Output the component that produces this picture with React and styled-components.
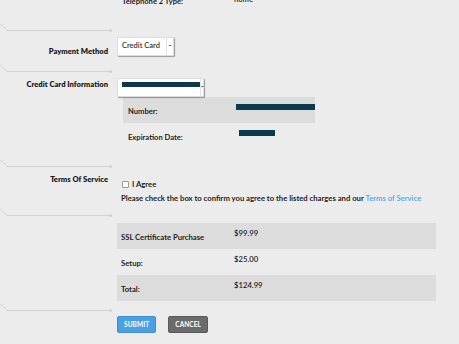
import styled, { createGlobalStyle } from "styled-components";

const GlobalStyle = createGlobalStyle`
	html, body {
		margin: 0;
		padding: 0;
		background: #ececec;
		overflow: hidden;
	}
	body {
		font-family: Lato, "Open Sans", "Liberation Sans", sans-serif;
		color: #1e1e1e;
	}
`;

const Divider = () => (
	<DividerWrap>
		<svg width="114" height="9" viewBox="0 0 114 9">
			<path d="M0 0.5 L7 7.5 L110 7.5" fill="none" stroke="#d2d2d2" strokeWidth="1" />
			<circle cx="110.5" cy="7.5" r="1.6" fill="#d2d2d2" />
		</svg>
	</DividerWrap>
);

const Select = ({ children, width }) => (
	<SelectBox $width={width}>
		<SelectText>{children}</SelectText>
		<Caret>-</Caret>
	</SelectBox>
);

const App = () => {
	return (
		<Page>
			<GlobalStyle />
			<Section $top={-13} $bottom={10}>
				<span />
				<DetailRow>
					<DetailLabel>Telephone 2 Type:</DetailLabel>
					<DetailValue $shift={4}>home</DetailValue>
				</DetailRow>
			</Section>
			<Divider />

			<Section $top={5} $bottom={8}>
				<Label $pad={9}>Payment Method</Label>
				<div>
					<Select width={57}>Credit Card</Select>
				</div>
			</Section>
			<Divider />

			<Section $top={5} $bottom={10}>
				<Label $pad={1}>Credit Card Information</Label>
				<div>
					<Select width={87}>
						<Redacted $w={78} $h={5} />
					</Select>
					<Details>
						<DetailRow $shade>
							<DetailLabel>Number:</DetailLabel>
							<DetailValue>
								<Redacted $w={79} $h={6} />
							</DetailValue>
						</DetailRow>
						<DetailRow>
							<DetailLabel>Expiration Date:</DetailLabel>
							<DetailValue $shift={3}>
								<Redacted $w={36} $h={6} />
							</DetailValue>
						</DetailRow>
					</Details>
				</div>
			</Section>
			<Divider />

			<Section $top={0} $bottom={5}>
				<Label $pad={6}>Terms Of Service</Label>
				<Terms>
					<Agree>
						<Checkbox />
						<span>I Agree</span>
					</Agree>
					<Notice>
						Please check the box to confirm you agree to the listed charges and our{" "}
						<Link href="#">Terms of Service</Link>
					</Notice>
				</Terms>
			</Section>
			<Divider />

			<Section $top={6} $bottom={2}>
				<span />
				<Charges>
					<ChargeRow $shade>
						<span>SSL Certificate Purchase</span>
						<Amount>$99.99</Amount>
					</ChargeRow>
					<ChargeRow>
						<span>Setup:</span>
						<Amount>$25.00</Amount>
					</ChargeRow>
					<ChargeRow $shade>
						<span>Total:</span>
						<Amount>$124.99</Amount>
					</ChargeRow>
				</Charges>
			</Section>
			<Divider />

			<Actions>
				<Button $variant="primary">Submit</Button>
				<Button>Cancel</Button>
			</Actions>
		</Page>
	);
};

const Page = styled.div`
	width: 459px;
	height: 344px;
	overflow: hidden;
	font-weight: 700;
`;

const DividerWrap = styled.div`
	height: 9px;
	line-height: 0;

	svg {
		display: block;
	}
`;

const Section = styled.div`
	display: grid;
	grid-template-columns: 108px 1fr;
	column-gap: 9px;
	margin-top: ${(p) => p.$top}px;
	margin-bottom: ${(p) => p.$bottom}px;
`;

const Label = styled.div`
	text-align: right;
	font-size: 7.6px;
	line-height: 10px;
	font-weight: 800;
	padding-top: ${(p) => p.$pad}px;
	white-space: nowrap;
`;

const SelectBox = styled.div`
	position: relative;
	display: flex;
	align-items: center;
	width: ${(p) => p.$width}px;
	height: 19px;
	box-sizing: border-box;
	background: #fff;
	border: 1px solid #dcdcdc;
	border-radius: 1px;
	box-shadow: 1px 1px 1px rgba(0, 0, 0, 0.35);
	padding-left: 4px;
`;

const SelectText = styled.span`
	flex: 1;
	font-size: 7.5px;
	font-weight: 600;
	color: #333;
	line-height: 10px;
	margin-top: -2px;
`;

const Caret = styled.span`
	width: 6px;
	height: 100%;
	border-left: 1px solid #e2e2e2;
	font-size: 7px;
	line-height: 15px;
	text-align: center;
	color: #222;
`;

const Redacted = styled.span`
	display: inline-block;
	width: ${(p) => p.$w}px;
	height: ${(p) => p.$h}px;
	background: #0b3a4e;
	vertical-align: top;
`;

const Details = styled.div`
	margin-left: 6px;
	width: 192px;
`;

const DetailRow = styled.div`
	display: grid;
	grid-template-columns: 113px 1fr;
	height: 26px;
	background: ${(p) => (p.$shade ? "#dcdcdc" : "transparent")};
	font-size: 7.6px;
	width: 192px;
`;

const DetailLabel = styled.span`
	padding-left: 5px;
	align-self: center;
	margin-top: 1px;
`;

const DetailValue = styled.span`
	padding-top: 7px;
	padding-left: ${(p) => p.$shift || 0}px;
	font-weight: 600;
`;

const Terms = styled.div`
	padding-top: 11px;
	font-size: 7.7px;
	line-height: 10px;
`;

const Agree = styled.label`
	display: flex;
	align-items: center;
	gap: 3px;
	padding-left: 5px;
`;

const Checkbox = styled.span`
	width: 5px;
	height: 5px;
	background: #fff;
	border: 1px solid #9a9a9a;
	border-radius: 1px;
`;

const Notice = styled.p`
	margin: 4px 0 0 4px;
	white-space: nowrap;
`;

const Link = styled.a`
	color: #4ea6e6;
	text-decoration: none;
	font-weight: 600;
`;

const Charges = styled.div`
	width: 319px;
`;

const ChargeRow = styled.div`
	display: grid;
	grid-template-columns: 113px 1fr;
	height: 26px;
	padding: 0 4px;
	background: ${(p) => (p.$shade ? "#dcdcdc" : "transparent")};
	font-size: 7.7px;

	& > span:first-child {
		align-self: center;
		margin-top: 1px;
	}
`;

const Amount = styled.span`
	padding-top: 5px;
	font-weight: 600;
`;

const Actions = styled.div`
	display: flex;
	gap: 12px;
	padding-left: 117px;
	margin-top: 4px;
`;

const Button = styled.button`
	height: 17px;
	padding: 0 6px;
	border: 1px solid ${(p) => (p.$variant === "primary" ? "#3d8fd0" : "#5a5a5a")};
	border-radius: 2px;
	background: ${(p) => (p.$variant === "primary" ? "#4aa0e2" : "#6b6b6b")};
	color: #fff;
	font-family: Lato, "Liberation Sans", sans-serif;
	font-size: 6.5px;
	font-weight: 700;
	text-transform: uppercase;
	letter-spacing: 0.1px;
`;

export default App;
